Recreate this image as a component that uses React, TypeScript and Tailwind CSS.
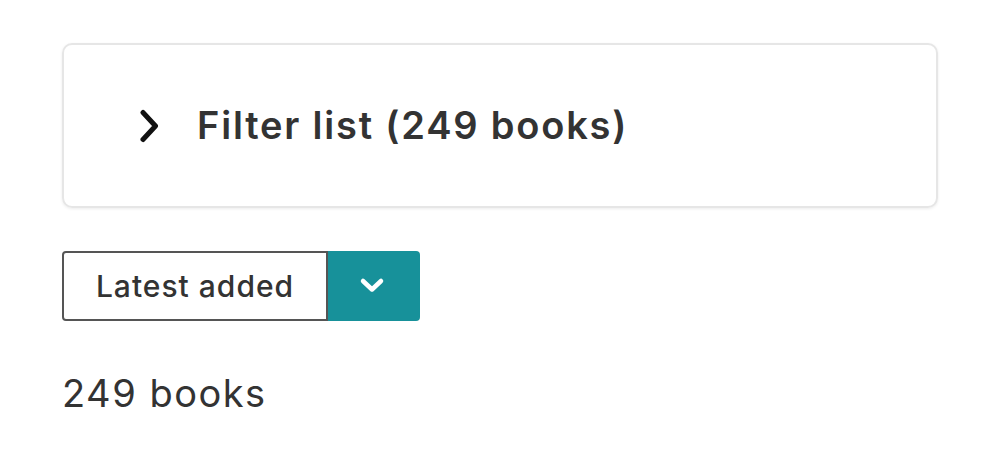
import React from "react";

const App = () => {
  return (
    <div className="min-h-[466px] bg-white px-[62px] pt-[43px] font-['Inter',sans-serif] text-[#333]">
      <div className="flex h-[165px] items-center rounded-[10px] border-2 border-[#e6e6e6] pl-[74px] shadow-[0_1px_3px_rgba(0,0,0,0.08)]">
        <svg width="22" height="34" viewBox="0 0 22 34" className="mr-[37px]">
          <path d="M5 3.5 L17.5 17 L5 30.5" fill="none" stroke="#111" strokeWidth="5" strokeLinecap="round" strokeLinejoin="round" />
        </svg>
        <h2 className="text-[38px] font-semibold tracking-[1.8px] text-[#333]">Filter list (249 books)</h2>
      </div>

      <div className="mt-[43px] flex h-[70px]">
        <div className="flex w-[266px] items-center justify-center rounded-l-[4px] border-2 border-[#555] text-[30px] font-medium tracking-[1px] text-[#333]">
          Latest added
        </div>
        <button className="flex w-[92px] items-center justify-center rounded-r-[4px] bg-[#17919a] pr-[4px]">
          <svg width="28" height="20" viewBox="0 0 28 20">
            <path d="M5 5 L14 13.5 L23 5" fill="none" stroke="#fff" strokeWidth="4.5" strokeLinecap="round" strokeLinejoin="round" />
          </svg>
        </button>
      </div>

      <p className="mt-[44px] text-[38px] tracking-[1.5px] text-[#333]">249 books</p>
    </div>
  );
};

export default App;
